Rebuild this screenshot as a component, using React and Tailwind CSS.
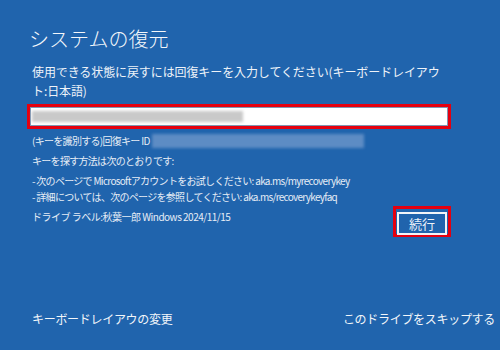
export default function App() {
  const font = { fontFamily: '"Noto Sans CJK JP", "Noto Sans", sans-serif' };
  return (
    <div
      style={font}
      className="w-[500px] h-[350px] bg-[#2064ad] text-white flex flex-col overflow-hidden"
    >
      <div className="pl-[29px] pt-[26px]">
        <h1 className="text-[20px] leading-[26px] font-light text-[#f4f7fb]">
          システムの復元
        </h1>
      </div>

      <div className="ml-[27px] w-[424px] flex flex-col">
        <p className="pl-[5px] mt-[10px] text-[12px] leading-[19px] tracking-[-0.1px] text-[#eef3f9]">
          使用できる状態に戻すには回復キーを入力してください(キーボードレイアウ
          <br />
          ト:日本語)
        </p>

        <div className="mt-[4px] h-[25px] border-[3px] border-[#e5000f]">
          <div className="h-full border border-[#8097b3] bg-white flex items-center pl-[1px]">
            <div className="h-[11px] w-[211px] bg-[#c9c9c9] blur-[1.5px]" />
          </div>
        </div>

        <div className="pl-[5px] mt-[4px] flex items-center h-[16px] text-[10px] leading-[16px] tracking-[-0.7px] text-[#e6edf6]">
          <span>(キーを識別する)回復キー ID</span>
          <div className="ml-[2px] h-[14px] w-[212px] bg-[#5d8cc4] blur-[1.5px]" />
        </div>

        <div className="pl-[5px] text-[10px] leading-[16px] tracking-[-0.7px] text-[#e6edf6]">
          <p className="mt-[4px]">キーを探す方法は次のとおりです:</p>
          <p className="mt-[4px]">
            - 次のページで Microsoftアカウントをお試しください: aka.ms/myrecoverykey
          </p>
          <p>- 詳細については、次のページを参照してください: aka.ms/recoverykeyfaq</p>
        </div>

        <div className="mt-[1px] flex justify-between items-start">
          <p className="pl-[5px] mt-[3px] text-[10px] leading-[16px] tracking-[-0.5px] text-[#e6edf6]">
            ドライブ ラベル:秋葉一郎 Windows 2024/11/15
          </p>
          <div className="w-[58px] h-[31px] border-[3px] border-[#e5000f] p-[1px]">
            <button className="w-full h-full border-2 border-[#f2f5f9] text-[13px] leading-none text-[#eef3f9]">
              続行
            </button>
          </div>
        </div>
      </div>

      <div className="flex-1" />

      <div className="flex justify-between pl-[32px] pr-[5px] pb-[21px] text-[12px] leading-[20px] tracking-[-0.3px] text-[#f2f6fa]">
        <span>キーボードレイアウの変更</span>
        <span>このドライブをスキップする</span>
      </div>
    </div>
  );
}
